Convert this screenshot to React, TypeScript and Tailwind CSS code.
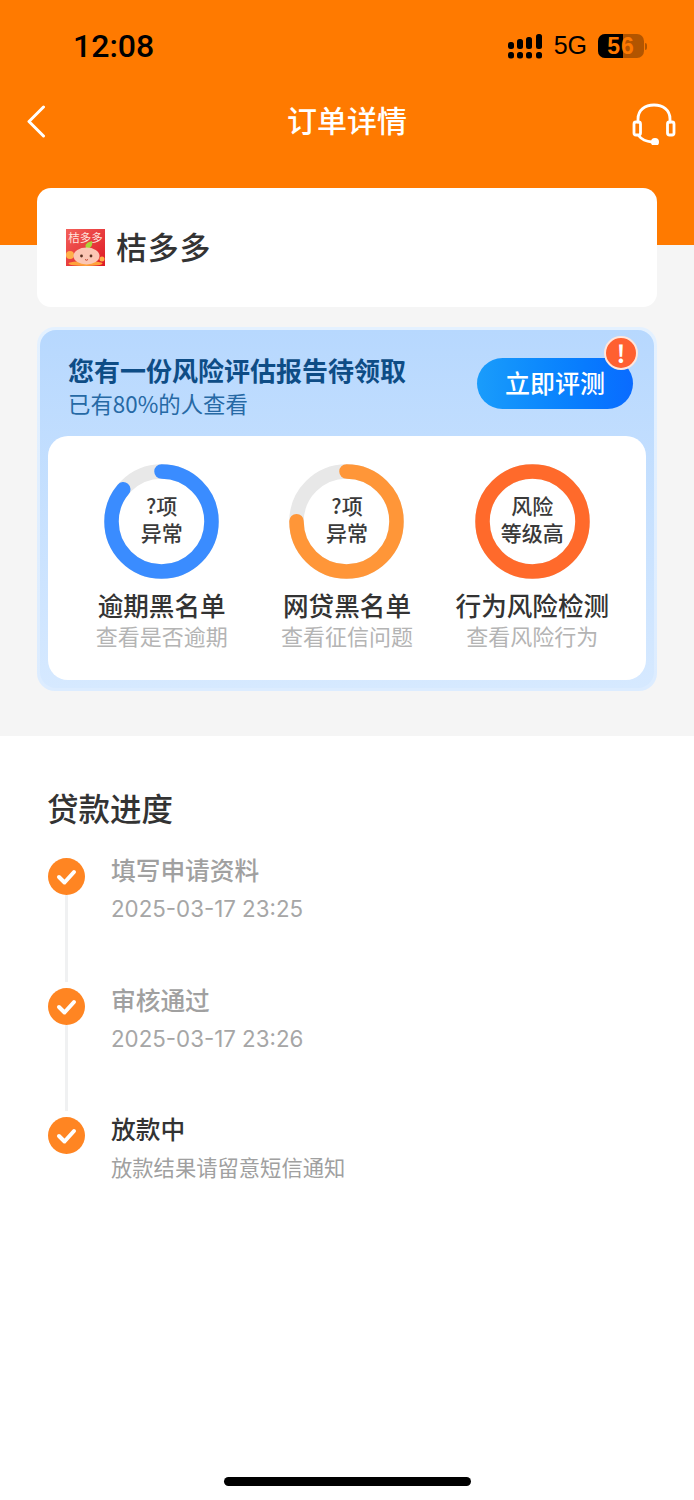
import React from 'react';

const CJK = { fontFamily: '"Noto Sans CJK SC", "Noto Sans", sans-serif' };

const rings = [
  { lines: ['?项', '异常'], title: '逾期黑名单', sub: '查看是否逾期', color: '#3a8cff', pct: 0.86 },
  { lines: ['?项', '异常'], title: '网贷黑名单', sub: '查看征信问题', color: '#ff9638', pct: 0.75 },
  { lines: ['风险', '等级高'], title: '行为风险检测', sub: '查看风险行为', color: '#ff6a2b', pct: 1 },
];

const steps = [
  { title: '填写申请资料', sub: '2025-03-17 23:25', active: false },
  { title: '审核通过', sub: '2025-03-17 23:26', active: false },
  { title: '放款中', sub: '放款结果请留意短信通知', active: true },
];

const Ring = ({ color, pct, lines }: { color: string; pct: number; lines: string[] }) => {
  const r = 50;
  const c = 2 * Math.PI * r;
  return (
    <div className="grid w-[115px] h-[115px] place-items-center">
      <svg width="115" height="115" viewBox="0 0 115 115" className="[grid-area:1/1]">
        <circle cx="57.5" cy="57.5" r={r} fill="none" stroke="#e8e8e8" strokeWidth="14.5" />
        <circle
          cx="57.5"
          cy="57.5"
          r={r}
          fill="none"
          stroke={color}
          strokeWidth="14.5"
          strokeLinecap={pct < 1 ? 'round' : 'butt'}
          strokeDasharray={`${c * pct} ${c}`}
          transform="rotate(-90 57.5 57.5)"
        />
      </svg>
      <div className="[grid-area:1/1] -mt-[6px] text-center text-[21px] leading-[27px] font-medium text-[#3a3a3a]">
        {lines.map((l) => (
          <div key={l}>{l}</div>
        ))}
      </div>
    </div>
  );
};

const StatusBar = () => (
  <div className="h-[92px] pl-[73px] pr-[47px] flex items-center justify-between text-black">
    <span className="text-[32px] font-medium" style={{ fontFamily: 'Roboto, sans-serif' }}>12:08</span>
    <div className="flex items-center">
      <svg width="35" height="25" viewBox="0 0 35 25" fill="#000">
        <rect x="0" y="8" width="6" height="7" rx="2.5" />
        <rect x="9" y="5" width="6" height="10" rx="2.5" />
        <rect x="18" y="3" width="6" height="12" rx="2.5" />
        <rect x="28" y="0" width="6" height="15" rx="2.5" />
        <rect x="0" y="18" width="6" height="6.5" rx="2.5" />
        <rect x="9" y="18" width="6" height="6.5" rx="2.5" />
        <rect x="18" y="18" width="6" height="6.5" rx="2.5" />
        <rect x="28" y="18" width="6" height="6.5" rx="2.5" />
      </svg>
      <span className="ml-[11px] text-[25px]" style={{ fontFamily: '"Liberation Sans", sans-serif' }}>5G</span>
      <div className="ml-[11px] flex items-center">
        <div
          className="relative w-[46px] h-[24px] rounded-[7px] overflow-hidden bg-black/30 flex items-center justify-center text-[23px] font-bold text-[#ff7a00]"
          style={{ fontFamily: '"Liberation Sans", sans-serif' }}
        >
          <div className="absolute left-0 top-0 bottom-0 w-[25px] bg-black" />
          <span className="relative tracking-[1px]">56</span>
        </div>
        <div className="ml-[1px] w-[2px] h-[7px] rounded-r-full bg-black/30" />
      </div>
    </div>
  </div>
);

const Back = () => (
  <svg width="20" height="33" viewBox="0 0 20 33" fill="none" stroke="#fff" strokeWidth="3" strokeLinecap="round" strokeLinejoin="round">
    <path d="M17.5 2 L3 16.5 L17.5 31" />
  </svg>
);

const Headset = () => (
  <svg width="44" height="42" viewBox="0 0 44 42" fill="none" stroke="#fff" strokeWidth="2.8" strokeLinecap="round">
    <path d="M6 19 V16 C6 7 13 2 22 2 C31 2 38 7 38 16 V19" />
    <rect x="2" y="19" width="6.5" height="13" rx="2" />
    <rect x="35.5" y="19" width="6.5" height="13" rx="2" />
    <path d="M7 33 C10 37 14 38.5 20 39" />
    <circle cx="23" cy="39" r="2.6" fill="#fff" />
  </svg>
);

const Logo = () => (
  <svg width="39" height="37" viewBox="0 0 39 37">
    <defs>
      <linearGradient id="logoBg" x1="0" y1="0" x2="1" y2="1">
        <stop offset="0" stopColor="#f4605a" />
        <stop offset="1" stopColor="#dd1a24" />
      </linearGradient>
    </defs>
    <rect width="39" height="37" fill="url(#logoBg)" />
    <text x="19.5" y="13" textAnchor="middle" fontSize="11.5" fill="#ffe3dc" style={CJK}>桔多多</text>
    <circle cx="4" cy="26" r="4" fill="#ffb04a" />
    <circle cx="36" cy="30" r="2.5" fill="#ffb04a" />
    <ellipse cx="19.5" cy="34.5" rx="17" ry="2.5" fill="#ffa23c" />
    <path d="M20 19 C18 15 22 13 26 12 C27 16 25 19 21 20 Z" fill="#a9d43c" />
    <ellipse cx="20.5" cy="27" rx="13" ry="8.5" fill="#fbc6b4" />
    <circle cx="15.5" cy="27" r="1.4" fill="#5a3020" />
    <circle cx="25" cy="27" r="1.4" fill="#5a3020" />
    <path d="M19 30.5 Q20.5 32 22 30.5" stroke="#c2442e" strokeWidth="1" fill="none" />
  </svg>
);

const Check = () => (
  <svg width="37" height="37" viewBox="0 0 37 37" className="shrink-0">
    <circle cx="18.5" cy="18.5" r="18.5" fill="#ff8522" />
    <path d="M11 19 L16.5 24.5 L26 14" fill="none" stroke="#fff" strokeWidth="4" strokeLinecap="round" strokeLinejoin="round" />
  </svg>
);

export default function App() {
  return (
    <div className="relative w-[694px] h-[1500px] bg-white overflow-hidden" style={CJK}>
      <div className="bg-[#f5f5f5] h-[736px]">
        <div className="h-[245px] bg-[#ff7a00]">
          <StatusBar />
          <div className="h-[60px] -mt-[1px] pl-[26px] pr-[18px] flex items-center">
            <div className="w-[38px]">
              <Back />
            </div>
            <div className="flex-1 text-center text-[30px] font-medium text-white -mt-[3px]">订单详情</div>
            <div className="w-[46px] flex justify-end pt-[5px]">
              <Headset />
            </div>
          </div>
        </div>

        <div className="-mt-[57px] px-[37px]">
          <div className="h-[119px] bg-white rounded-[14px] pl-[29px] flex items-center gap-[11px]">
            <Logo />
            <span className="text-[31px] font-medium text-[#333] tracking-[0.7px] -mt-[2px]">桔多多</span>
          </div>

          <div className="mt-[20px] h-[364px] rounded-[18px] p-[3px] bg-gradient-to-b from-[#e4f1ff] to-[#dcecff]">
            <div className="h-full rounded-[16px] bg-gradient-to-b from-[#b7d8fe] to-[#d6e9ff] px-[8px] flex flex-col">
              <div className="h-[106px] pl-[21px] pr-[13px] flex items-center justify-between">
                <div className="pt-[6px] -ml-[1px]">
                  <div className="text-[26px] leading-[34px] font-bold text-[#0e4d86]">您有一份风险评估报告待领取</div>
                  <div className="text-[22.4px] leading-[32px] text-[#2669a5]">已有80%的人查看</div>
                </div>
                <div className="relative">
                  <div className="w-[156px] h-[51px] rounded-full bg-gradient-to-r from-[#1a9cfb] to-[#0a6bff] flex items-center justify-center text-[25px] font-medium text-white">
                    立即评测
                  </div>
                  <div className="absolute -top-[22px] right-[-5px] w-[34px] h-[34px] rounded-full bg-[#ff6030] border-[2px] border-[#ffe6dc] flex items-center justify-center text-[24px] font-bold text-white">
                    !
                  </div>
                </div>
              </div>
              <div className="h-[244px] bg-white rounded-[20px] px-[21px] pt-[28px] grid grid-cols-3">
                {rings.map((r) => (
                  <div key={r.title} className="flex flex-col items-center">
                    <Ring color={r.color} pct={r.pct} lines={r.lines} />
                    <div className="mt-[8px] text-[25.6px] leading-[36px] font-medium text-[#333] whitespace-nowrap">{r.title}</div>
                    <div className="-mt-[2px] text-[22px] leading-[28px] text-[#b4b4b4] whitespace-nowrap">{r.sub}</div>
                  </div>
                ))}
              </div>
            </div>
          </div>
        </div>
      </div>

      <div className="pl-[47px] pt-[49px]">
        <div className="text-[31.5px] leading-[44px] font-medium text-[#333]">贷款进度</div>
        <div className="mt-[23px] flex flex-col">
          {steps.map((s, i) => (
            <div key={s.title} className="relative h-[129.5px] flex gap-[26px] pl-[1px]">
              {i < steps.length - 1 && <div className="absolute left-[17.5px] top-[43px] bottom-0 w-[3px] bg-[#f0f1f2]" />}
              <div className="pt-[6px]">
                <Check />
              </div>
              <div>
                <div className={`text-[24.7px] leading-[36px] font-medium -mt-[1px] ${s.active ? 'text-[#333]' : 'text-[#a0a0a0]'}`}>
                  {s.title}
                </div>
                {s.active ? (
                  <div className="mt-[3px] text-[21.3px] leading-[36px] text-[#a0a0a0]">{s.sub}</div>
                ) : (
                  <div className="mt-[4px] text-[22.3px] leading-[36px] text-[#a6a6a6]" style={{ fontFamily: 'Inter, sans-serif' }}>{s.sub}</div>
                )}
              </div>
            </div>
          ))}
        </div>
      </div>

      <div className="absolute left-[224px] top-[1477px] w-[247px] h-[9px] rounded-full bg-black" />
    </div>
  );
}
